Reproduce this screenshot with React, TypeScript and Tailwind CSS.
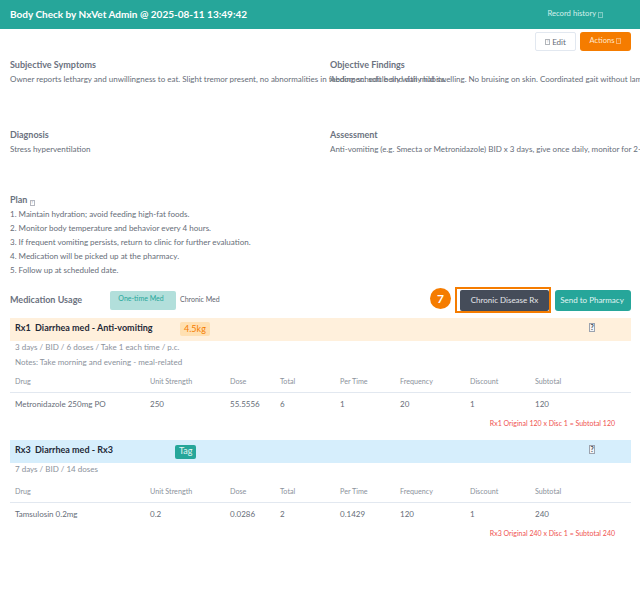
const cols = "grid grid-cols-[135px_80px_50px_60px_60px_70px_65px_1fr] px-[5px]";
const headers = ["Drug", "Unit Strength", "Dose", "Total", "Per Time", "Frequency", "Discount", "Subtotal"];

function Tofu() {
  return (
    <span className="inline-flex h-[6px] w-[5px] items-center justify-center border border-current align-[-0.5px] text-[4px] leading-none opacity-50">
      ?
    </span>
  );
}

function BigTofu() {
  return (
    <span className="mb-[5px] ml-auto inline-flex h-[9px] w-[6px] items-center justify-center border border-[#9ca3af] bg-[#f3f4f6] text-[7px] leading-none font-bold text-[#374151]">
      ?
    </span>
  );
}

function Table({ row, note }: { row: string[]; note: string }) {
  return (
    <div className="mt-[6px]">
      <div className={`${cols} h-[19px] items-center border-b border-[#e2e8f0] pb-[1px] text-[7.2px] text-[#8b929c]`}>
        {headers.map((h) => (
          <div key={h}>{h}</div>
        ))}
      </div>
      <div className={`${cols} h-[21px] items-center text-[8px] text-[#666d78]`}>
        {row.map((c, i) => (
          <div key={i}>{c}</div>
        ))}
      </div>
      <div className="flex h-[18px] items-center justify-end pr-[16px] text-[7px] text-[#ef5350]">{note}</div>
    </div>
  );
}

function Section({ title, body }: { title: string; body: string }) {
  return (
    <div className="w-[320px] shrink-0 pl-[10px]">
      <div className="h-[15px] text-[9px] leading-[15px] font-bold text-[#6b7280]">{title}</div>
      <div className="h-[14px] text-[8px] leading-[14px] whitespace-nowrap text-[#666d78]">{body}</div>
    </div>
  );
}

export default function App() {
  return (
    <div className="h-[600px] w-[640px] overflow-hidden bg-white font-['Lato',sans-serif]">
      <div className="flex h-[29px] items-center justify-between bg-[#26a69a] pr-[37px] pl-[10px] text-white">
        <div className="text-[10px] font-bold">Body Check by NxVet Admin @ 2025-08-11 13:49:42</div>
        <div className="pb-[2px] text-[7.7px] text-[#d4f0ec]">Record history <Tofu /></div>
      </div>

      <div className="flex h-[22px] items-start justify-end gap-[4px] pt-[3px] pr-[9px]">
        <div className="flex h-[19px] w-[41px] items-center justify-center gap-[2px] rounded-[2px] border border-[#e2e8f0] text-[8px] text-[#666d78]"><Tofu /> Edit</div>
        <div className="flex h-[19px] w-[51px] items-center justify-center gap-[2px] rounded-[3px] bg-[#f57c00] pb-[1px] text-[7.5px] text-[#ffe9d2]">Actions <Tofu /></div>
      </div>

      <div className="mt-[6px] flex h-[70px] items-start">
        <Section title="Subjective Symptoms" body="Owner reports lethargy and unwillingness to eat. Slight tremor present, no abnormalities in feeding schedule and daily habits." />
        <Section title="Objective Findings" body="Abdomen: soft belly with mild swelling. No bruising on skin. Coordinated gait without lameness observed during the exam." />
      </div>
      <div className="flex h-[65px] items-start">
        <Section title="Diagnosis" body="Stress hyperventilation" />
        <Section title="Assessment" body="Anti-vomiting (e.g. Smecta or Metronidazole) BID x 3 days, give once daily, monitor for 2-3 days." />
      </div>

      <div className="pr-[9px] pl-[10px]">
        <div className="h-[15px] text-[9px] leading-[15px] font-bold text-[#6b7280]">Plan <Tofu /></div>
        <div className="text-[8px] leading-[14px] text-[#666d78]">
          <div>1. Maintain hydration; avoid feeding high-fat foods.</div>
          <div>2. Monitor body temperature and behavior every 4 hours.</div>
          <div>3. If frequent vomiting persists, return to clinic for further evaluation.</div>
          <div>4. Medication will be picked up at the pharmacy.</div>
          <div>5. Follow up at scheduled date.</div>
        </div>

        <div className="mt-[10px] flex h-[26px] items-center">
          <div className="w-[100px] text-[9px] font-bold text-[#6b7280]">Medication Usage</div>
          <div className="flex h-[19px] w-[66px] justify-center rounded-[2px] bg-[#b2dfdb] pt-[2px] pr-[4px] text-[7px] text-[#26a69a]">One-time Med</div>
          <div className="pb-[2px] pl-[4px] text-[7px] text-[#5f6670]">Chronic Med</div>
          <div className="ml-auto flex items-center gap-[4px]">
            <div className="relative flex h-[26px] w-[96px] items-center justify-end border-2 border-[#f57c00]">
              <div className="absolute top-[-1px] left-[-27px] flex h-[21px] w-[21px] items-center justify-center rounded-full bg-[#f57c00] text-[12px] font-bold text-white">7</div>
              <div className="flex h-[21px] w-[89px] items-center justify-center rounded-[2px] bg-[#454c59] text-[8px] text-[#e5e7eb]">Chronic Disease Rx</div>
            </div>
            <div className="flex h-[21px] w-[76px] items-center justify-center rounded-[3px] bg-[#26a69a] pr-[2px] text-[8px] text-[#e2f5f3]">Send to Pharmacy</div>
          </div>
        </div>

        <div className="mt-[5px] flex h-[23px] items-center bg-[#fff0dc] pr-[36px] pl-[5px]">
          <div className="w-[165px] pb-[4px] text-[9px] font-bold whitespace-pre text-[#1f2937]">Rx1  Diarrhea med - Anti-vomiting</div>
          <div className="mb-[2px] rounded-[2px] bg-[#ffe0b2] px-[4px] py-[1px] text-[9px] leading-[12px] text-[#f57c00]">4.5kg</div>
          <BigTofu />
        </div>
        <div className="flex h-[12px] items-end px-[5px] text-[8px] leading-[11px] text-[#8b929c]">3 days / BID / 6 doses / Take 1 each time / p.c.</div>
        <div className="flex h-[15px] items-end px-[5px] text-[8px] leading-[11px] text-[#8b929c]">Notes: Take morning and evening - meal-related</div>
        <Table row={["Metronidazole 250mg PO", "250", "55.5556", "6", "1", "20", "1", "120"]} note="Rx1 Original 120 x Disc 1 = Subtotal 120" />

        <div className="mt-[8px] flex h-[23px] items-center bg-[#d6eefc] pr-[36px] pl-[5px]">
          <div className="w-[160px] pb-[4px] text-[9px] font-bold whitespace-pre text-[#1f2937]">Rx3  Diarrhea med - Rx3</div>
          <div className="rounded-[2px] bg-[#26a69a] px-[4px] pb-[2px] text-[9px] leading-[12px] text-[#e2f5f3]">Tag</div>
          <BigTofu />
        </div>
        <div className="flex h-[12px] items-end px-[5px] text-[8px] leading-[11px] text-[#8b929c]">7 days / BID / 14 doses</div>
        <div className="h-[3px]" />
        <Table row={["Tamsulosin 0.2mg", "0.2", "0.0286", "2", "0.1429", "120", "1", "240"]} note="Rx3 Original 240 x Disc 1 = Subtotal 240" />
      </div>
    </div>
  );
}
